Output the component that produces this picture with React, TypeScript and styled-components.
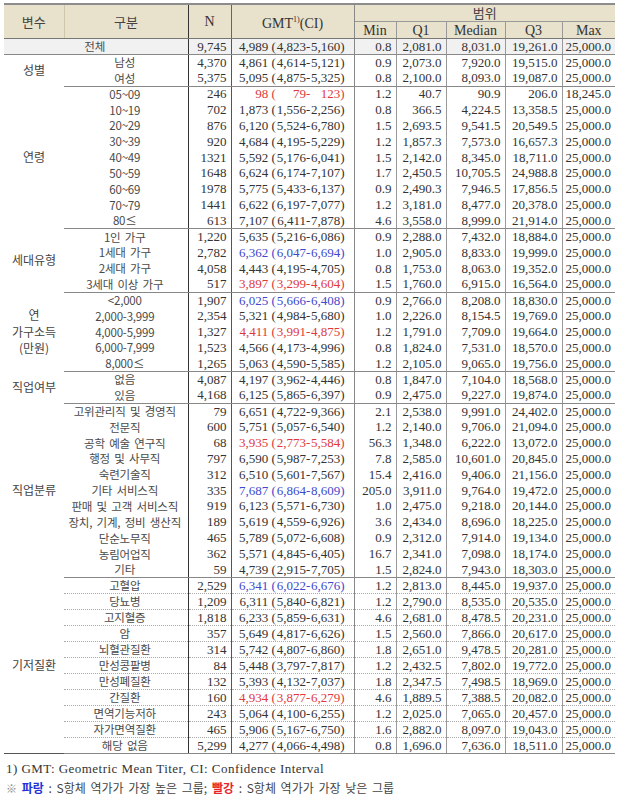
import React from "react";
import styled, { createGlobalStyle } from "styled-components";

type Tone = "" | "b" | "r";

// label, N, gmt, lo, hi, min, q1, median, q3, max, tone
type Row = [string, string, string, string, string, string, string, string, string, string, Tone?];

interface Group {
  name: React.ReactNode;
  rows: Row[];
  dotted?: boolean;
}

const total: Row = ["전체", "9,745", "4,989", "4,823", "5,160", "0.8", "2,081.0", "8,031.0", "19,261.0", "25,000.0"];

const groups: Group[] = [
  {
    name: "성별",
    rows: [
      ["남성", "4,370", "4,861", "4,614", "5,121", "0.9", "2,073.0", "7,920.0", "19,515.0", "25,000.0"],
      ["여성", "5,375", "5,095", "4,875", "5,325", "0.8", "2,100.0", "8,093.0", "19,087.0", "25,000.0"],
    ],
  },
  {
    name: "연령",
    rows: [
      ["05~09", "246", "98", "79", "123", "1.2", "40.7", "90.9", "206.0", "18,245.0", "r"],
      ["10~19", "702", "1,873", "1,556", "2,256", "0.8", "366.5", "4,224.5", "13,358.5", "25,000.0"],
      ["20~29", "876", "6,120", "5,524", "6,780", "1.5", "2,693.5", "9,541.5", "20,549.5", "25,000.0"],
      ["30~39", "920", "4,684", "4,195", "5,229", "1.2", "1,857.3", "7,573.0", "16,657.3", "25,000.0"],
      ["40~49", "1321", "5,592", "5,176", "6,041", "1.5", "2,142.0", "8,345.0", "18,711.0", "25,000.0"],
      ["50~59", "1648", "6,624", "6,174", "7,107", "1.7", "2,450.5", "10,705.5", "24,988.8", "25,000.0"],
      ["60~69", "1978", "5,775", "5,433", "6,137", "0.9", "2,490.3", "7,946.5", "17,856.5", "25,000.0"],
      ["70~79", "1441", "6,622", "6,197", "7,077", "1.2", "3,181.0", "8,477.0", "20,378.0", "25,000.0"],
      ["80≤", "613", "7,107", "6,411", "7,878", "4.6", "3,558.0", "8,999.0", "21,914.0", "25,000.0"],
    ],
  },
  {
    name: "세대유형",
    rows: [
      ["1인 가구", "1,220", "5,635", "5,216", "6,086", "0.9", "2,288.0", "7,432.0", "18,884.0", "25,000.0"],
      ["1세대 가구", "2,782", "6,362", "6,047", "6,694", "1.0", "2,905.0", "8,833.0", "19,999.0", "25,000.0", "b"],
      ["2세대 가구", "4,058", "4,443", "4,195", "4,705", "0.8", "1,753.0", "8,063.0", "19,352.0", "25,000.0"],
      ["3세대 이상 가구", "517", "3,897", "3,299", "4,604", "1.5", "1,760.0", "6,915.0", "16,564.0", "25,000.0", "r"],
    ],
  },
  {
    name: (
      <>
        연<br />
        가구소득
        <br />
        (만원)
      </>
    ),
    rows: [
      ["<2,000", "1,907", "6,025", "5,666", "6,408", "0.9", "2,766.0", "8,208.0", "18,830.0", "25,000.0", "b"],
      ["2,000-3,999", "2,354", "5,321", "4,984", "5,680", "1.0", "2,226.0", "8,154.5", "19,769.0", "25,000.0"],
      ["4,000-5,999", "1,327", "4,411", "3,991", "4,875", "1.2", "1,791.0", "7,709.0", "19,664.0", "25,000.0", "r"],
      ["6,000-7,999", "1,523", "4,566", "4,173", "4,996", "0.8", "1,824.0", "7,531.0", "18,570.0", "25,000.0"],
      ["8,000≤", "1,265", "5,063", "4,590", "5,585", "1.2", "2,105.0", "9,065.0", "19,756.0", "25,000.0"],
    ],
  },
  {
    name: "직업여부",
    rows: [
      ["없음", "4,087", "4,197", "3,962", "4,446", "0.8", "1,847.0", "7,104.0", "18,568.0", "25,000.0"],
      ["있음", "4,168", "6,125", "5,865", "6,397", "0.9", "2,475.0", "9,227.0", "19,874.0", "25,000.0"],
    ],
  },
  {
    name: "직업분류",
    rows: [
      ["고위관리직 및 경영직", "79", "6,651", "4,722", "9,366", "2.1", "2,538.0", "9,991.0", "24,402.0", "25,000.0"],
      ["전문직", "600", "5,751", "5,057", "6,540", "1.2", "2,140.0", "9,706.0", "21,094.0", "25,000.0"],
      ["공학 예술 연구직", "68", "3,935", "2,773", "5,584", "56.3", "1,348.0", "6,222.0", "13,072.0", "25,000.0", "r"],
      ["행정 및 사무직", "797", "6,590", "5,987", "7,253", "7.8", "2,585.0", "10,601.0", "20,845.0", "25,000.0"],
      ["숙련기술직", "312", "6,510", "5,601", "7,567", "15.4", "2,416.0", "9,406.0", "21,156.0", "25,000.0"],
      ["기타 서비스직", "335", "7,687", "6,864", "8,609", "205.0", "3,911.0", "9,764.0", "19,472.0", "25,000.0", "b"],
      ["판매 및 고객 서비스직", "919", "6,123", "5,571", "6,730", "1.0", "2,475.0", "9,218.0", "20,144.0", "25,000.0"],
      ["장치, 기계, 정비 생산직", "189", "5,619", "4,559", "6,926", "3.6", "2,434.0", "8,696.0", "18,225.0", "25,000.0"],
      ["단순노무직", "465", "5,789", "5,072", "6,608", "0.9", "2,312.0", "7,914.0", "19,134.0", "25,000.0"],
      ["농림어업직", "362", "5,571", "4,845", "6,405", "16.7", "2,341.0", "7,098.0", "18,174.0", "25,000.0"],
      ["기타", "59", "4,739", "2,915", "7,705", "1.5", "2,824.0", "7,943.0", "18,303.0", "25,000.0"],
    ],
  },
  {
    name: "기저질환",
    dotted: true,
    rows: [
      ["고혈압", "2,529", "6,341", "6,022", "6,676", "1.2", "2,813.0", "8,445.0", "19,937.0", "25,000.0", "b"],
      ["당뇨병", "1,209", "6,311", "5,840", "6,821", "1.2", "2,790.0", "8,535.0", "20,535.0", "25,000.0"],
      ["고지혈증", "1,818", "6,233", "5,859", "6,631", "4.6", "2,681.0", "8,478.5", "20,231.0", "25,000.0"],
      ["암", "357", "5,649", "4,817", "6,626", "1.5", "2,560.0", "7,866.0", "20,617.0", "25,000.0"],
      ["뇌혈관질환", "314", "5,742", "4,807", "6,860", "1.8", "2,651.0", "9,478.5", "20,281.0", "25,000.0"],
      ["만성콩팥병", "84", "5,448", "3,797", "7,817", "1.2", "2,432.5", "7,802.0", "19,772.0", "25,000.0"],
      ["만성폐질환", "132", "5,393", "4,132", "7,037", "1.8", "2,347.5", "7,498.5", "18,969.0", "25,000.0"],
      ["간질환", "160", "4,934", "3,877", "6,279", "4.6", "1,889.5", "7,388.5", "20,082.0", "25,000.0", "r"],
      ["면역기능저하", "243", "5,064", "4,100", "6,255", "1.2", "2,025.0", "7,065.0", "20,457.0", "25,000.0"],
      ["자가면역질환", "465", "5,906", "5,167", "6,750", "1.6", "2,882.0", "8,097.0", "19,043.0", "25,000.0"],
      ["해당 없음", "5,299", "4,277", "4,066", "4,498", "0.8", "1,696.0", "7,636.0", "18,511.0", "25,000.0"],
    ],
  },
];

const toneColor = (t?: Tone) => (t === "b" ? "#4049cc" : t === "r" ? "#e0393b" : "inherit");

const GlobalStyle = createGlobalStyle`
  body {
    margin: 0;
    background: #fff;
    color: #333;
    font-family: "Liberation Serif", "Noto Sans CJK KR", serif;
  }
`;

const Page = styled.div`
  padding: 3px 0 0 4px;
  width: 611px;
`;

const Table = styled.table`
  border-collapse: collapse;
  table-layout: fixed;
  width: 611px;
  border-top: 2px solid #8c8c8c;
  border-bottom: 1px solid #555;
  font-size: 13px;
`;

const HeadCell = styled.th<{ $right?: string; $bottom?: string }>`
  background: #e8e1cc;
  font-weight: normal;
  font-size: 14px;
  padding: 0;
  height: 16px;
  line-height: 15px;
  text-align: center;
  color: #333;
  border-right: ${(p) => (p.$right ? `1px solid ${p.$right}` : "none")};
  border-bottom: 1px solid ${(p) => p.$bottom ?? "#777"};
`;

const HeadKor = styled.span`
  font-family: "Noto Sans CJK KR", sans-serif;
  font-size: 13px;
  color: #444;
`;

const BodyRow = styled.tr<{ $end?: boolean; $dotted?: boolean; $shade?: boolean }>`
  height: 15.87px;
  background: ${(p) => (p.$shade ? "#f1f1f1" : "transparent")};

  td {
    border-bottom: ${(p) => (p.$end ? "1px solid #888" : p.$dotted ? "1px dotted #aaa" : "none")};
  }
`;

const Cell = styled.td<{ $align?: "left" | "center" | "right"; $right?: string }>`
  padding: 0 4px 0 2px;
  line-height: 14px;
  white-space: nowrap;
  text-align: ${(p) => p.$align ?? "right"};
  border-right: ${(p) => (p.$right ? `1px solid ${p.$right}` : "none")};
  vertical-align: middle;
`;

const GroupCell = styled.td`
  padding: 0;
  text-align: center;
  vertical-align: middle;
  font-family: "Noto Sans CJK KR", sans-serif;
  font-size: 12px;
  line-height: 16.5px;
  color: #444;
  border-bottom: 1px solid #888;
`;

const Kor = styled.span`
  font-family: "Noto Sans CJK KR", sans-serif;
  font-size: 11.5px;
  line-height: 14px;
  letter-spacing: -0.2px;
  word-spacing: 2px;
  color: #4a4a4a;
`;

const Gmt = styled.span<{ $tone?: Tone }>`
  color: ${(p) => toneColor(p.$tone)};
`;

const Slot = styled.span`
  display: inline-block;
  width: 30px;
  text-align: right;
`;

const Note = styled.p`
  margin: 5px 0 0;
  font-size: 13px;
  line-height: 19px;
  padding-left: 2px;
  color: #333;
  letter-spacing: 0.45px;
`;

const Legend = styled.p`
  margin: 0;
  font-size: 12px;
  line-height: 19px;
  padding-left: 2px;
  color: #444;
  font-family: "Noto Sans CJK KR", sans-serif;
  word-spacing: 2px;
`;

const Mark = styled.strong<{ $tone: Tone }>`
  color: ${(p) => (p.$tone === "b" ? "#2332d6" : "#e8262a")};
  font-weight: bold;
`;

const Ref = styled.span`
  color: #888;
  font-size: 11px;
`;

function Values({ r }: { r: Row }) {
  return (
    <>
      <Cell $right="#555">{r[1]}</Cell>
      <Cell $align="center" $right="#888">
        <Gmt $tone={r[10]}>
          <Slot>{r[2]}</Slot> (<Slot>{r[3]}</Slot>-<Slot>{r[4]}</Slot>)
        </Gmt>
      </Cell>
      <Cell $right="#999">{r[5]}</Cell>
      <Cell $right="#999">{r[6]}</Cell>
      <Cell $right="#999">{r[7]}</Cell>
      <Cell $right="#999">{r[8]}</Cell>
      <Cell>{r[9]}</Cell>
    </>
  );
}

export default function App() {
  return (
    <Page>
      <GlobalStyle />
      <Table>
        <colgroup>
          <col style={{ width: 60 }} />
          <col style={{ width: 124 }} />
          <col style={{ width: 43 }} />
          <col style={{ width: 123 }} />
          <col style={{ width: 42 }} />
          <col style={{ width: 50 }} />
          <col style={{ width: 59 }} />
          <col style={{ width: 57 }} />
          <col style={{ width: 53 }} />
        </colgroup>
        <thead>
          <tr>
            <HeadCell rowSpan={2} $right="#cfc6ac">
              <HeadKor>변수</HeadKor>
            </HeadCell>
            <HeadCell rowSpan={2} $right="#333">
              <HeadKor>구분</HeadKor>
            </HeadCell>
            <HeadCell rowSpan={2} $right="#666">
              N
            </HeadCell>
            <HeadCell rowSpan={2} $right="#888">
              GMT<sup style={{ fontSize: 8 }}>1)</sup>(CI)
            </HeadCell>
            <HeadCell colSpan={5} $bottom="#999">
              <HeadKor>범위</HeadKor>
            </HeadCell>
          </tr>
          <tr>
            <HeadCell $right="#999">Min</HeadCell>
            <HeadCell $right="#999">Q1</HeadCell>
            <HeadCell $right="#999">Median</HeadCell>
            <HeadCell $right="#999">Q3</HeadCell>
            <HeadCell>Max</HeadCell>
          </tr>
        </thead>
        <tbody>
          <BodyRow $end $shade>
            <Cell colSpan={2} $align="center" $right="#333">
              <Kor>{total[0]}</Kor>
            </Cell>
            <Values r={total} />
          </BodyRow>
          {groups.map((g, gi) =>
            g.rows.map((r, i) => (
              <BodyRow key={`${gi}-${i}`} $end={i === g.rows.length - 1} $dotted={g.dotted}>
                {i === 0 && <GroupCell rowSpan={g.rows.length}>{g.name}</GroupCell>}
                <Cell $align="center" $right="#333">
                  <Kor>{r[0]}</Kor>
                </Cell>
                <Values r={r} />
              </BodyRow>
            ))
          )}
        </tbody>
      </Table>
      <Note>1) GMT: Geometric Mean Titer, CI: Confidence Interval</Note>
      <Legend>
        <Ref>※</Ref> <Mark $tone="b">파랑</Mark> : S항체 역가가 가장 높은 그룹; <Mark $tone="r">빨강</Mark> : S항체 역가가 가장 낮은 그룹
      </Legend>
    </Page>
  );
}
